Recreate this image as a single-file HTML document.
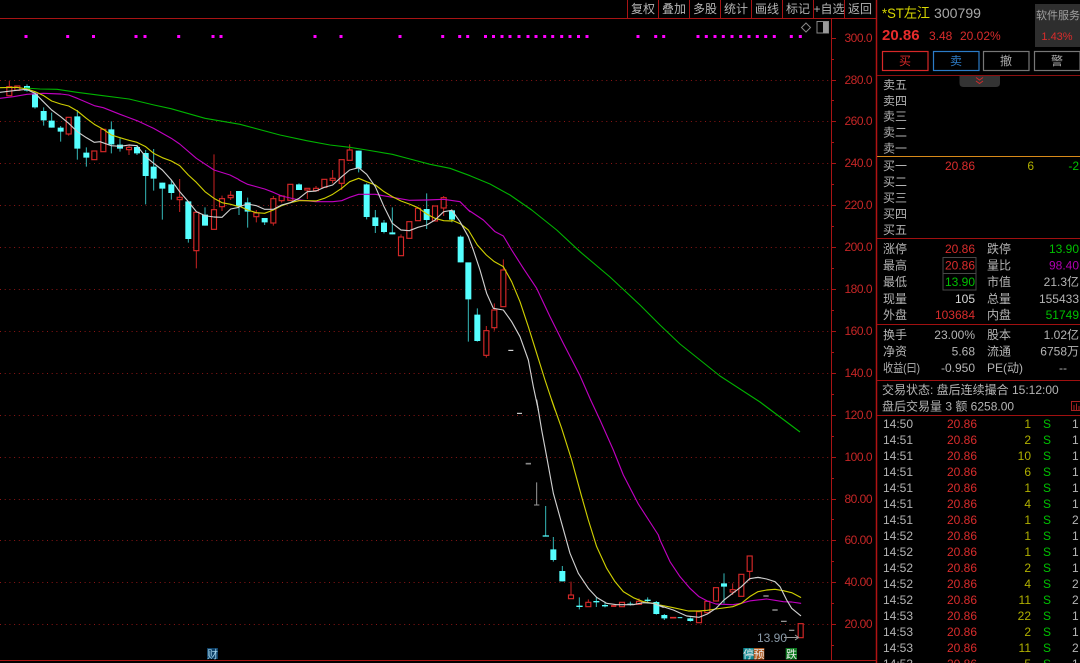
<!DOCTYPE html>
<html><head><meta charset="utf-8"><style>
html,body{margin:0;padding:0;background:#000;width:1080px;height:663px;overflow:hidden}
svg{display:block}
text{font-family:"Liberation Sans","Noto Sans CJK SC",sans-serif;font-size:12px;fill:#b4b4b4}
.e{text-anchor:end}.m{text-anchor:middle}
.r{fill:#d92c2c}.g{fill:#00c000}.y{fill:#b0b000}.w{fill:#c8c8c8}
.ax text{fill:#c62626;text-anchor:end;letter-spacing:-.5px}
.cw{stroke:#35b8b8;stroke-width:3;fill:none}
.cb{stroke:#55ffff;stroke-width:18;fill:none}
.rw{stroke:#c82222;stroke-width:3;fill:none}
.rb rect{fill:#000;stroke:#d42828;stroke-width:3.500}
.ma{fill:none;stroke-width:3.400;stroke-linejoin:round;stroke-linecap:round}
.wh{stroke:#d0d0d0}.ye{stroke:#cfcf00}.ma20{stroke:#c000c0}
</style></head><body>
<svg width="1080" height="663" viewBox="0 0 1080 663" xmlns="http://www.w3.org/2000/svg">
<rect width="1080" height="663" fill="#000"/>
<!-- grid -->
<g stroke="#8c1616" stroke-width="1" stroke-dasharray="1 3.7" fill="none">
<path d="M0 80.500H831M0 121.500H831M0 163.500H831M0 205.500H831M0 247.500H831M0 289.500H831M0 331.500H831M0 373.500H831M0 415.500H831M0 457.500H831M0 499.500H831M0 540.500H831M0 582.500H831M0 624.500H831"/>
</g>
<!-- top bar -->
<g stroke="#a81414" stroke-width="1" fill="none">
<path d="M0 18.500H876M627.500 0V18M658.500 0V18M689.500 0V18M720.500 0V18M751.500 0V18M782.500 0V18M813.500 0V18M844.500 0V18"/>
<path d="M831.500 18V660M0 660.500H877"/>
<path d="M831 38.500H836M831 80.500H836M831 121.500H836M831 163.500H836M831 205.500H836M831 247.500H836M831 289.500H836M831 331.500H836M831 373.500H836M831 415.500H836M831 457.500H836M831 499.500H836M831 540.500H836M831 582.500H836M831 624.500H836"/>
<path d="M831 59.500H834M831 100.500H834M831 142.500H834M831 184.500H834M831 226.500H834M831 268.500H834M831 310.500H834M831 352.500H834M831 394.500H834M831 436.500H834M831 478.500H834M831 519.500H834M831 561.500H834M831 603.500H834M831 645.500H834"/>
</g>
<g class="m">
<text class="m" x="643" y="13">复权</text><text class="m" x="674" y="13">叠加</text><text class="m" x="705" y="13">多股</text><text class="m" x="736" y="13">统计</text><text class="m" x="767" y="13">画线</text><text class="m" x="798" y="13">标记</text><text class="m" x="829" y="13">+自选</text><text class="m" x="860" y="13">返回</text>
</g>
<path d="M806 23L810.500 27.500L806 32L801.500 27.500Z" fill="none" stroke="#888"/>
<rect x="817" y="21.500" width="11.500" height="11.500" fill="none" stroke="#888" stroke-width="1"/>
<rect x="823" y="22" width="5" height="11" fill="#999"/>
<!-- axis labels -->
<g class="ax">
<text x="872" y="42">300.0</text><text x="872" y="84">280.0</text><text x="872" y="125">260.0</text><text x="872" y="167">240.0</text><text x="872" y="209">220.0</text><text x="872" y="251">200.0</text><text x="872" y="293">180.0</text><text x="872" y="335">160.0</text><text x="872" y="377">140.0</text><text x="872" y="419">120.0</text><text x="872" y="461">100.0</text><text x="872" y="503">80.00</text><text x="872" y="544">60.00</text><text x="872" y="586">40.00</text><text x="872" y="628">20.00</text>
</g>
<!-- pink dots -->
<path stroke="#ff00ff" stroke-width="3" fill="none" d="M24.500 36.500h3M66.200 36.500h3M92 36.500h3M134.500 36.500h3M143.500 36.500h3M177.200 36.500h3M211.500 36.500h3M219.500 36.500h3M313.500 36.500h3M339.500 36.500h3M398.500 36.500h3M441.200 36.500h3M458.200 36.500h3M466.200 36.500h3M484 36.500h3M492 36.500h3M500.500 36.500h3M508.500 36.500h3M517.500 36.500h3M526.500 36.500h3M534.500 36.500h3M543.200 36.500h3M551.200 36.500h3M560.200 36.500h3M568.500 36.500h3M577 36.500h3M585.500 36.500h3M636.500 36.500h3M654.200 36.500h3M662.200 36.500h3M696.500 36.500h3M704.800 36.500h3M713.500 36.500h3M721.800 36.500h3M730.500 36.500h3M739.200 36.500h3M747.500 36.500h3M755.800 36.500h3M764.200 36.500h3M772.800 36.500h3M789.800 36.500h3M798.800 36.500h3"/>

<!-- candles section 1 -->
<g transform="translate(0 75) scale(.33333)">
<path class="cw" d="M81 28V50M105 50V101M131 97V152M155 113V158M182 153V200M232 105V254M259 217V275M334 139V235M360 190V230M411 210V240M437 225V388M461 222V347M487 323V434M514 315V374M565 379V503M615 397V452"/>
<path class="cb" d="M81 33V47M105 55V97M131 108V136M155 137V158M182 158V170M232 124V221M259 233V248M334 163V208M360 209V221M411 216V235M437 234V303M461 275V311M487 323V341M514 328V354M565 379V492M615 419V452"/>
<path class="rw" d="M28 18V35M206 177V182M387 224V240M387 208V217M539 312V367M539 374V411M589 527V580M642 238V404M666 362V371M666 395V408M692 348V361M692 368V375"/>
<g class="rb"><rect x="20.500" y="35" width="15" height="27"/><rect x="44.500" y="33" width="15" height="13"/><rect x="198.500" y="127" width="15" height="50"/><rect x="275.500" y="228" width="15" height="26"/><rect x="302.500" y="163" width="15" height="67"/><rect x="379.500" y="217" width="15" height="7"/><rect x="531.500" y="367" width="15" height="7"/><rect x="581.500" y="412" width="15" height="115"/><rect x="634.500" y="404" width="15" height="59"/><rect x="658.500" y="371" width="15" height="24"/><rect x="684.500" y="361" width="15" height="7"/></g>
</g>
<!-- candles section 2 -->
<g transform="translate(230 135) scale(.33333)">
<path class="cw" d="M27 168V240M53 188V278M104 249V270M207 145V165M386 47V112M410 145V253M436 225V294M462 255V295M487 217V298M590 175V282M666 226V262"/>
<path class="cb" d="M27 168V214M53 202V230M104 249V262M207 148V165M386 47V101M410 148V246M436 247V273M462 263V291M487 292V298M590 222V255M666 226V254"/>
<path class="rw" d="M79 225V262M130 183V272M155 180V203M232 165V192M258 153V170M308 105V145M335 145V165M359 28V45M513 298V306M641 183V243"/>
<g class="rb"><rect x="71.500" y="234" width="15" height="11"/><rect x="122.500" y="191" width="15" height="73"/><rect x="147.500" y="183" width="15" height="14"/><rect x="173.500" y="148" width="15" height="48"/><rect x="224.500" y="160" width="15" height="5"/><rect x="250.500" y="160" width="15" height="7"/><rect x="275.500" y="133" width="15" height="24"/><rect x="300.500" y="130" width="15" height="6"/><rect x="327.500" y="74" width="15" height="71"/><rect x="351.500" y="45" width="15" height="31"/><rect x="505.500" y="306" width="15" height="56"/><rect x="530.500" y="260" width="15" height="50"/><rect x="556.500" y="220" width="15" height="37"/><rect x="607.500" y="213" width="15" height="45"/><rect x="633.500" y="188" width="15" height="31"/></g>
</g>
<!-- candles section 3 -->
<g transform="translate(440 210) scale(.33333)">
<path class="cw" d="M62 76V157M85 268V395M112 295V395"/>
<path class="cb" d="M62 80V157M85 157V268M112 314V393"/>
<path class="rw" d="M139 348V362M139 436V443M163 280V300M163 353V362M190 148V180"/>
<g class="rb"><rect x="131.500" y="362" width="15" height="74"/><rect x="155.500" y="300" width="15" height="53"/><rect x="182.500" y="180" width="15" height="110"/></g>
<path d="M205 421H220" stroke="#fff" stroke-width="3"/>
</g>
<!-- candles section 4 -->
<g transform="translate(500 400) scale(.33333)">
<path d="M51 40H66" stroke="#eee" stroke-width="3"/>
<path d="M77 191H93" stroke="#888" stroke-width="5"/>
<path d="M110 247V315M102 315H118" stroke="#999" stroke-width="3" fill="none"/>
<path class="cw" d="M137 318V408M160 411V485M187 498V544M238 592V628M289 592V621M315 605V622M391 605V617M443 592V610M469 603V644M493 642V660"/>
<path d="M128 408H147M229 619H248M280 605H298M306 617H324M382 613H400M434 601H452" stroke="#55ffff" stroke-width="4" fill="none"/>
<path class="cb" d="M160 448V480M187 513V544M469 606V642M493 645V655"/>
<path class="rw" d="M213 545V585M265 598V607M417 595V604"/>
<g class="rb"><rect x="205.500" y="585" width="15" height="11"/><rect x="257.500" y="607" width="15" height="13"/><rect x="358.500" y="607" width="15" height="13"/><rect x="409.500" y="604" width="15" height="9"/></g>
<path d="M333 618H349M510 653H529" stroke="#e03030" stroke-width="5" fill="none"/>
<path d="M533 653H547" stroke="#55ffff" stroke-width="3"/>
</g>
<!-- candles section 5 -->
<g transform="translate(660 540) scale(.33333)">
<path class="cw" d="M91 232V245M192 100V190"/>
<path class="cb" d="M91 235V243M192 130V140"/>
<path class="rw" d="M218 130V149M218 156V165M269 94V122"/>
<g class="rb"><rect x="109.500" y="215" width="15" height="33"/><rect x="134.500" y="184" width="15" height="34"/><rect x="160.500" y="143" width="15" height="40"/><rect x="210.500" y="149" width="15" height="7"/><rect x="236.500" y="103" width="15" height="66"/><rect x="261.500" y="48" width="15" height="46"/><rect x="414.500" y="251" width="15" height="42"/></g>
<path d="M310 168H326M337 210H353M363 244H380M387 271H403" stroke="#aaa" stroke-width="3.500" fill="none"/>
<path d="M286 113H302" stroke="#ccc" stroke-width="3"/>
</g>

<!-- MA60 green -->
<polyline fill="none" stroke="#00b400" stroke-width="1.100" stroke-linejoin="round" points="25,88 40,89 57,89.300 77,92.300 103,95.700 129,99 154,105 171,108.700 205,118.300 240,124.300 280,135 306.700,140.700 330,145 349.700,147.300 366.700,150 392.300,154.300 410,159 430,164.300 450,168.300 470,175.700 490,184 510,195 531.700,210 556.700,230 580,251.700 610,277 640,305 660,325 680,344 720,376 760,402 800,432"/>
<!-- MA20 -->
<polyline class="ma ma20" transform="translate(0 75) scale(.33333)" points="0,70 40,65 81,58 130,55 182,57 206,60 232,70 283,92 310,98 360,118 411,137 461,160 514,190 539,207 589,250 642,285 690,300 717,314"/>
<polyline class="ma ma20" transform="translate(230 135) scale(.33333)" points="27,135 53,148 104,162 130,172 155,183 207,195 258,200 308,200 335,197 359,187 386,178 436,178 487,187 538,196 590,195 641,193 690,200 720,230"/>
<polyline class="ma ma20" transform="translate(440 210) scale(.33333)" points="85,0 130,30 165,65 190,78 215,120 250,175 290,235 330,320 370,400 420,497 452,570"/>
<polyline class="ma ma20" transform="translate(500 400) scale(.33333)" points="272,0 300,60 340,150 370,225 415,312 475,405 480,420"/>
<polyline class="ma ma20" transform="translate(660 540) scale(.33333)" points="-5,-15 0,0 30,65 60,110 90,145 117,170 142,183 168,192 218,194 244,190 269,183 294,180 320,177 345,181 370,185 395,186 422,190"/>
<!-- MA10 -->
<polyline class="ma ye" transform="translate(0 75) scale(.33333)" points="0,38 50,37 81,42 105,50 131,62 155,78 182,87 206,93 232,108 259,130 283,148 310,163 334,180 360,188 387,196 411,202 437,215 461,235 487,248 514,258 539,272 565,300 589,322 615,350 642,370 666,383 692,388 717,395"/>
<polyline class="ma ye" transform="translate(230 135) scale(.33333)" points="27,213 53,225 79,233 104,235 130,225 155,212 181,203 207,197 232,197 258,198 283,190 308,178 335,160 359,140 386,130 410,140 436,150 462,170 487,185 513,198 538,207 564,218 590,237 615,250 641,257 666,258"/>
<polyline class="ma ye" transform="translate(440 210) scale(.33333)" points="35,30 62,42 85,60 112,105 139,135 163,155 190,170 215,215 240,275 265,350 290,430 315,510 345,600"/>
<polyline class="ma ye" transform="translate(500 400) scale(.33333)" points="155,0 185,85 215,180 245,290 265,360 290,440 320,505 345,545 370,575 400,593 430,605 470,612"/>
<polyline class="ma ye" transform="translate(660 540) scale(.33333)" points="0,195 40,203 85,213 117,213 142,211 168,207 218,200 244,190 269,170 294,155 320,150 345,148 370,152 395,158 422,172"/>
<!-- MA5 -->
<polyline class="ma wh" transform="translate(0 75) scale(.33333)" points="0,52 50,46 80,43 105,55 130,80 155,105 182,125 206,145 232,170 259,188 283,202 300,200 334,212 360,214 387,210 411,212 437,245 461,265 487,285 514,315 539,350 565,380 589,410 615,422 642,426 666,427 692,402 717,397"/>
<polyline class="ma wh" transform="translate(230 135) scale(.33333)" points="27,215 53,207 79,212 104,223 130,223 155,210 181,203 207,190 232,170 258,168 283,157 308,150 335,125 359,105 386,98 410,118 436,155 462,215 487,265 513,285 538,287 564,277 590,270 615,255 641,230 666,226"/>
<polyline class="ma wh" transform="translate(440 210) scale(.33333)" points="35,0 60,35 85,80 100,120 120,180 140,250 160,295 190,300 215,335 240,380 265,450 280,530 295,600"/>
<polyline class="ma wh" transform="translate(500 400) scale(.33333)" points="110,0 125,90 140,170 160,280 185,370 210,460 235,520 265,565 290,592 320,610 350,614 400,614 430,608 460,610 490,622"/>
<polyline class="ma wh" transform="translate(660 540) scale(.33333)" points="0,197 40,210 80,228 117,232 142,222 168,205 192,180 218,160 244,140 269,116 294,112 320,117 345,125 360,140 380,180 395,205 422,227"/>

<!-- low label -->
<text x="757" y="642" style="fill:#8a9aa8">13.90</text>
<path d="M784 637.500H798M795 635L798.500 637.500L795 640" stroke="#999" fill="none"/>
<!-- bottom tags -->
<rect x="207" y="648" width="11" height="11" fill="#0d3f66"/>
<text x="207" y="658" style="font-size:11px;fill:#9fd0e8">财</text>
<rect x="743.300" y="648" width="10.500" height="11.500" fill="#0f8a94"/>
<rect x="753.800" y="648" width="10.500" height="11.500" fill="#b05a20"/>
<rect x="785.700" y="648" width="11.300" height="11.500" fill="#0e7a20"/>
<text x="743" y="658" style="font-size:11px;fill:#e8e8e8">停</text>
<text x="753.500" y="658" style="font-size:11px;fill:#e8e8e8">预</text>
<text x="786" y="658" style="font-size:11px;fill:#e8e8e8">跌</text>

<!-- right panel -->
<path d="M876.500 0V663" stroke="#b01414" stroke-width="1.500"/>
<text x="882" y="18" textLength="48" lengthAdjust="spacingAndGlyphs" style="font-size:14px;fill:#d8d800">*ST左江</text>
<text x="934" y="18" textLength="47" lengthAdjust="spacingAndGlyphs" style="font-size:14px;fill:#a8a8a8">300799</text>
<text x="882" y="40" style="font-size:15px;font-weight:bold;fill:#e82c2c">20.86</text>
<text x="929" y="40" class="r">3.48</text>
<text x="960" y="40" class="r">20.02%</text>
<rect x="1035" y="4" width="45" height="43" fill="#2e2e2e"/>
<text x="1036" y="19" style="font-size:11px;fill:#a0a0a0">软件服务</text>
<text x="1057" y="40" class="m r" style="font-size:11px">1.43%</text>
<g fill="none" stroke-width="1.200">
<rect x="882.500" y="51.500" width="45.500" height="19" stroke="#d82828"/>
<rect x="933.500" y="51.500" width="45.500" height="19" stroke="#2c7cc8"/>
<rect x="983.500" y="51.500" width="45.500" height="19" stroke="#777"/>
<rect x="1034.500" y="51.500" width="45.500" height="19" stroke="#777"/>
</g>
<text class="m" x="905" y="65" style="fill:#d82828">买</text>
<text class="m" x="956" y="65" style="fill:#2c7cc8">卖</text>
<text class="m" x="1006" y="65" style="fill:#aaa">撤</text>
<text class="m" x="1057" y="65" style="fill:#aaa">警</text>
<path d="M877 75.500H1080" stroke="#8c1010"/>
<path d="M959.500 76H1000V83Q1000 87 996 87H963.500Q959.500 87 959.500 83Z" fill="#333"/>
<path d="M976 77.500L979.500 80L983 77.500M976 81L979.500 83.500L983 81" stroke="#d02c2c" fill="none"/>

<g class="w">
<text x="883" y="89">卖五</text><text x="883" y="105">卖四</text><text x="883" y="120.500">卖三</text><text x="883" y="136.500">卖二</text><text x="883" y="152.500">卖一</text>
<text x="883" y="170">买一</text><text x="883" y="186">买二</text><text x="883" y="202">买三</text><text x="883" y="218">买四</text><text x="883" y="234">买五</text>
</g>
<path d="M877 156.500H1080" stroke="#d88a1a"/>
<text class="e r" x="975" y="170">20.86</text><text class="e y" x="1034" y="170">6</text><text class="e g" x="1079" y="170">-2</text>
<path d="M877 238.500H1080" stroke="#a01010"/>

<rect x="943" y="257.500" width="33" height="16" fill="none" stroke="#484848"/>
<rect x="943" y="273.500" width="33" height="16.500" fill="none" stroke="#484848"/>
<text x="883" y="253">涨停</text><text class="e r" x="975" y="253">20.86</text><text x="987" y="253">跌停</text><text class="e g" x="1079" y="253">13.90</text>
<text x="883" y="269.500">最高</text><text class="e r" x="975" y="269.500">20.86</text><text x="987" y="269.500">量比</text><text class="e" x="1079" y="269.500" style="fill:#b000b0">98.40</text>
<text x="883" y="286">最低</text><text class="e g" x="975" y="286">13.90</text><text x="987" y="286">市值</text><text class="e" x="1079" y="286">21.3亿</text>
<text x="883" y="303">现量</text><text class="e" x="975" y="303" style="fill:#d8d8d8">105</text><text x="987" y="303">总量</text><text class="e" x="1079" y="303">155433</text>
<text x="883" y="319">外盘</text><text class="e r" x="975" y="319">103684</text><text x="987" y="319">内盘</text><text class="e g" x="1079" y="319">51749</text>
<path d="M877 324.500H1080" stroke="#a01010"/>
<text x="883" y="339">换手</text><text class="e" x="975" y="339">23.00%</text><text x="987" y="339">股本</text><text class="e" x="1079" y="339">1.02亿</text>
<text x="883" y="355.500">净资</text><text class="e" x="975" y="355.500">5.68</text><text x="987" y="355.500">流通</text><text class="e" x="1079" y="355.500">6758万</text>
<text x="883" y="372" textLength="37" lengthAdjust="spacingAndGlyphs">收益(曰)</text><text class="e" x="975" y="372">-0.950</text><text x="987" y="372">PE(动)</text><text class="e" x="1067" y="372">--</text>
<path d="M877 380.500H1080" stroke="#a01010"/>
<text x="882" y="394">交易状态: 盘后连续撮合 15:12:00</text>
<text x="882" y="410.500">盘后交易量 3 额 6258.00</text>
<rect x="1071.500" y="401.500" width="9" height="9" fill="none" stroke="#a82020"/>
<path d="M1074 405V410M1076.500 403.500V410M1079 406V410" stroke="#a82020"/>
<path d="M877 415.500H1080" stroke="#a01010"/>

<!-- trades -->
<g>
<text x="883" y="428">14:50</text><text class="e r" x="977" y="428">20.86</text><text class="e y" x="1031" y="428">1</text><text class="g" x="1043" y="428">S</text><text x="1072" y="428">1</text>
<text x="883" y="444">14:51</text><text class="e r" x="977" y="444">20.86</text><text class="e y" x="1031" y="444">2</text><text class="g" x="1043" y="444">S</text><text x="1072" y="444">1</text>
<text x="883" y="460">14:51</text><text class="e r" x="977" y="460">20.86</text><text class="e y" x="1031" y="460">10</text><text class="g" x="1043" y="460">S</text><text x="1072" y="460">1</text>
<text x="883" y="476">14:51</text><text class="e r" x="977" y="476">20.86</text><text class="e y" x="1031" y="476">6</text><text class="g" x="1043" y="476">S</text><text x="1072" y="476">1</text>
<text x="883" y="492">14:51</text><text class="e r" x="977" y="492">20.86</text><text class="e y" x="1031" y="492">1</text><text class="g" x="1043" y="492">S</text><text x="1072" y="492">1</text>
<text x="883" y="508">14:51</text><text class="e r" x="977" y="508">20.86</text><text class="e y" x="1031" y="508">4</text><text class="g" x="1043" y="508">S</text><text x="1072" y="508">1</text>
<text x="883" y="524">14:51</text><text class="e r" x="977" y="524">20.86</text><text class="e y" x="1031" y="524">1</text><text class="g" x="1043" y="524">S</text><text x="1072" y="524">2</text>
<text x="883" y="540">14:52</text><text class="e r" x="977" y="540">20.86</text><text class="e y" x="1031" y="540">1</text><text class="g" x="1043" y="540">S</text><text x="1072" y="540">1</text>
<text x="883" y="556">14:52</text><text class="e r" x="977" y="556">20.86</text><text class="e y" x="1031" y="556">1</text><text class="g" x="1043" y="556">S</text><text x="1072" y="556">1</text>
<text x="883" y="572">14:52</text><text class="e r" x="977" y="572">20.86</text><text class="e y" x="1031" y="572">2</text><text class="g" x="1043" y="572">S</text><text x="1072" y="572">1</text>
<text x="883" y="588">14:52</text><text class="e r" x="977" y="588">20.86</text><text class="e y" x="1031" y="588">4</text><text class="g" x="1043" y="588">S</text><text x="1072" y="588">2</text>
<text x="883" y="604">14:52</text><text class="e r" x="977" y="604">20.86</text><text class="e y" x="1031" y="604">11</text><text class="g" x="1043" y="604">S</text><text x="1072" y="604">2</text>
<text x="883" y="620">14:53</text><text class="e r" x="977" y="620">20.86</text><text class="e y" x="1031" y="620">22</text><text class="g" x="1043" y="620">S</text><text x="1072" y="620">1</text>
<text x="883" y="636">14:53</text><text class="e r" x="977" y="636">20.86</text><text class="e y" x="1031" y="636">2</text><text class="g" x="1043" y="636">S</text><text x="1072" y="636">1</text>
<text x="883" y="652">14:53</text><text class="e r" x="977" y="652">20.86</text><text class="e y" x="1031" y="652">11</text><text class="g" x="1043" y="652">S</text><text x="1072" y="652">2</text>
<text x="883" y="668">14:53</text><text class="e r" x="977" y="668">20.86</text><text class="e y" x="1031" y="668">5</text><text class="g" x="1043" y="668">S</text><text x="1072" y="668">1</text>
</g>
</svg>
</body></html>
